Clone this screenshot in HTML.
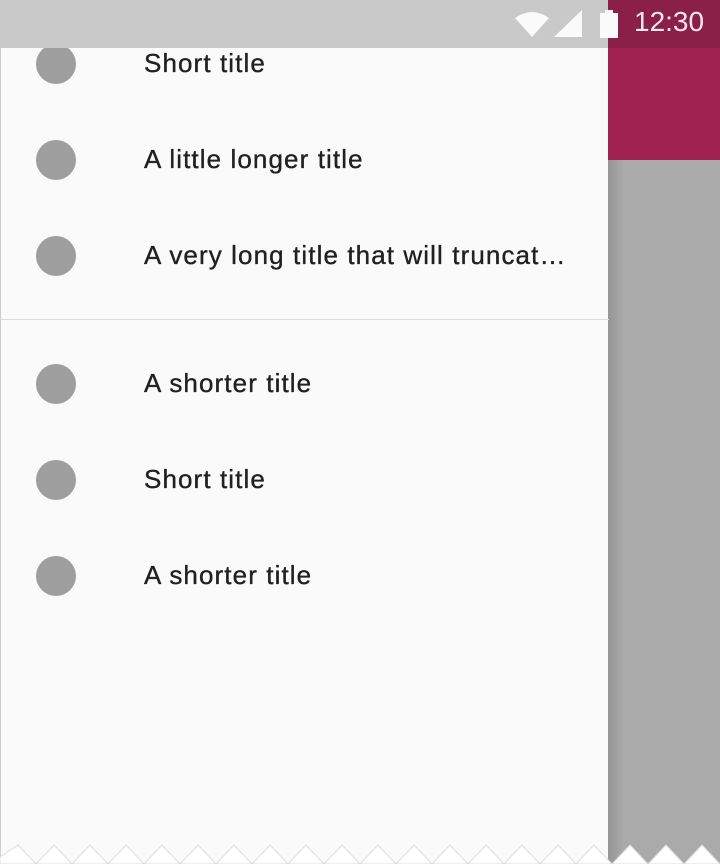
<!DOCTYPE html>
<html><head><style>
body{margin:0;width:720px;height:864px;overflow:hidden;position:relative;background:#aaa;font-family:"Liberation Sans",sans-serif}
.appbar{position:absolute;left:0;top:0;width:720px;height:160px;background:#a0234f}
.status{position:absolute;left:0;top:0;width:720px;height:48px;background:#8a1f48}
.shadow{position:absolute;left:608px;top:160px;width:16px;height:704px;background:linear-gradient(to right,rgba(0,0,0,.12),rgba(0,0,0,0))}
.drawer{position:absolute;left:0;top:0;width:608px;height:864px;background:#fafafa;border-left:1px solid #ccc;box-sizing:border-box}
.dstatus{position:absolute;left:0;top:0;width:608px;height:48px;background:#c9c9c9}
.row{position:absolute;left:0;height:96px;width:608px}
.row i{position:absolute;left:35px;top:28px;width:40px;height:40px;border-radius:50%;background:#9e9e9e}
.row span{position:absolute;left:143px;top:-1px;line-height:96px;font-size:26px;letter-spacing:1.1px;-webkit-text-stroke:0.35px #212121;color:#212121;white-space:nowrap}
.div{position:absolute;left:0;top:319px;width:608px;height:1px;background:#ddd}
.time{position:absolute;left:634px;top:6px;font-size:28px;color:#f3e6ec}
</style></head><body>
<div class="appbar"></div>
<div class="status"></div>
<div class="shadow"></div>
<div class="drawer">
<div class="row" style="top:16px"><i></i><span>Short title</span></div>
<div class="row" style="top:112px"><i></i><span>A little longer title</span></div>
<div class="row" style="top:208px"><i></i><span>A very long title that will truncat…</span></div>
<div class="div"></div>
<div class="row" style="top:336px"><i></i><span>A shorter title</span></div>
<div class="row" style="top:432px"><i></i><span>Short title</span></div>
<div class="row" style="top:528px"><i></i><span>A shorter title</span></div>
</div>
<div class="dstatus"></div>
<svg style="position:absolute;left:0;top:0" width="720" height="48">
<path d="M515 18 Q532 6 549 18 L532 37 Z" fill="#fafafa"/>
<path d="M554 37 L582 10 L582 37 Z" fill="#fafafa"/>
<rect x="600" y="13" width="18" height="25" fill="#fafafa"/>
<rect x="605" y="10" width="8" height="4" fill="#fafafa"/>
</svg>
<div class="time">12:30</div>
<svg style="position:absolute;left:0;top:840px" width="720" height="24">
<path d="M0 24 L0 17 L18 5 L36 24 L54 5 L72 24 L90 5 L108 24 L126 5 L144 24 L162 5 L180 24 L198 5 L216 24 L234 5 L252 24 L270 5 L288 24 L306 5 L324 24 L342 5 L360 24 L378 5 L396 24 L414 5 L432 24 L450 5 L468 24 L486 5 L504 24 L522 5 L540 24 L558 5 L576 24 L594 5 L612 24 L630 5 L648 24 L666 5 L684 24 L702 5 L720 24 Z" fill="#fff" stroke="#ddd" stroke-width="1"/>
</svg>
</body></html>
